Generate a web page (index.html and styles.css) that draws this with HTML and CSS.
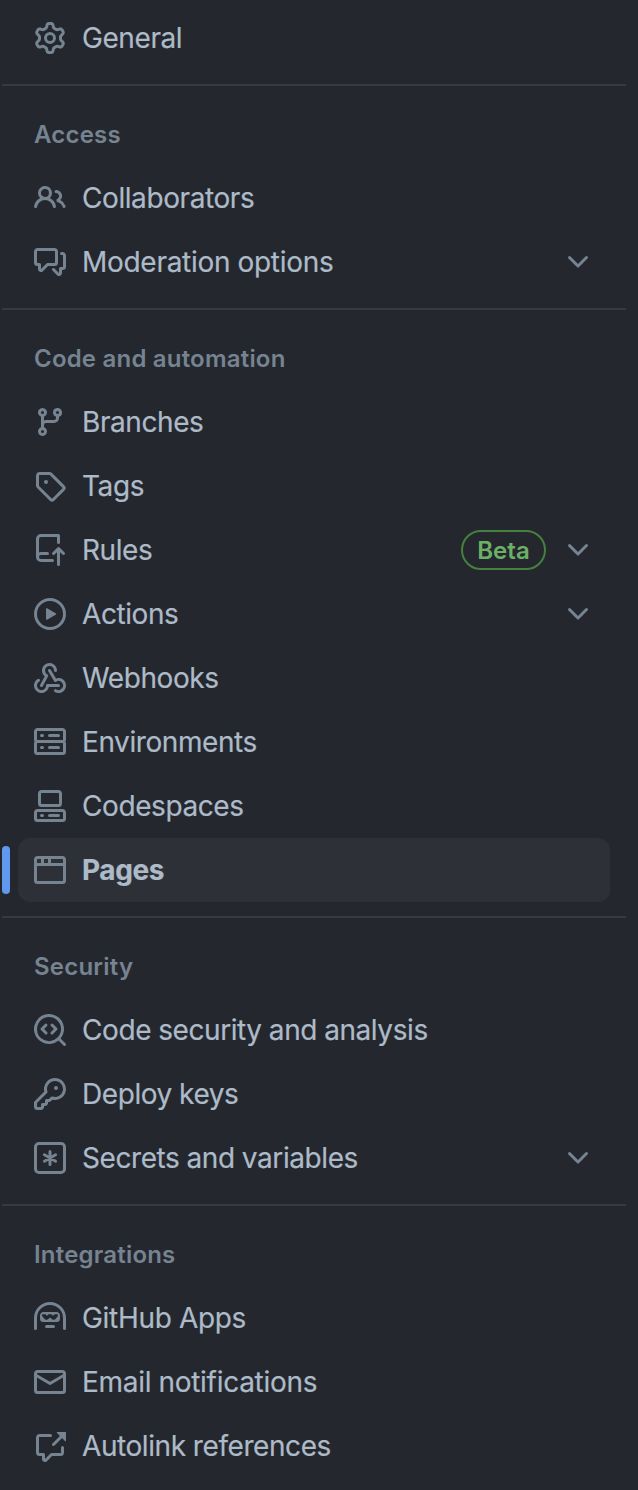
FILE: index.html
```
<!DOCTYPE html>
<html lang="en">
<head>
<meta charset="utf-8">
<title>Settings</title>
<link rel="stylesheet" href="styles.css">
</head>
<body>
<svg class="sprite" aria-hidden="true">
  <symbol id="chevron" viewBox="0 0 16 16"><path d="M12.78 5.22a.749.749 0 0 1 0 1.06l-4.25 4.25a.749.749 0 0 1-1.06 0L3.22 6.28a.749.749 0 1 1 1.06-1.06L8 8.939l3.72-3.719a.749.749 0 0 1 1.06 0Z"/></symbol>
</svg>
<nav class="sidebar">
  <ul class="group">
    <li class="item"><svg class="icon" viewBox="0 0 16 16"><path d="M8 0a8.2 8.2 0 0 1 .701.031C9.444.095 9.99.645 10.16 1.29l.288 1.107c.018.066.079.158.212.224.231.114.454.243.668.386.123.082.233.09.299.071l1.103-.303c.644-.176 1.392.021 1.82.63.27.385.506.792.704 1.218.315.675.111 1.422-.364 1.891l-.814.806c-.049.048-.098.147-.088.294.016.257.016.515 0 .772-.01.147.038.246.088.294l.814.806c.475.469.679 1.216.364 1.891a7.977 7.977 0 0 1-.704 1.217c-.428.61-1.176.807-1.82.63l-1.102-.302c-.067-.019-.177-.011-.3.071a5.909 5.909 0 0 1-.668.386c-.133.066-.194.158-.211.224l-.29 1.106c-.168.646-.715 1.196-1.458 1.26a8.006 8.006 0 0 1-1.402 0c-.743-.064-1.289-.614-1.458-1.26l-.289-1.106c-.018-.066-.079-.158-.212-.224a5.738 5.738 0 0 1-.668-.386c-.123-.082-.233-.09-.299-.071l-1.103.303c-.644.176-1.392-.021-1.82-.63a8.12 8.12 0 0 1-.704-1.218c-.315-.675-.111-1.422.363-1.891l.815-.806c.05-.048.098-.147.088-.294a6.214 6.214 0 0 1 0-.772c.01-.147-.038-.246-.088-.294l-.815-.806C.635 6.045.431 5.298.746 4.623a7.92 7.92 0 0 1 .704-1.217c.428-.61 1.176-.807 1.82-.63l1.102.302c.067.019.177.011.3-.071.214-.143.437-.272.668-.386.133-.066.194-.158.211-.224l.29-1.106C6.009.645 6.556.095 7.299.03 7.53.01 7.764 0 8 0Zm-.571 1.525c-.036.003-.108.036-.137.146l-.289 1.105c-.147.561-.549.967-.998 1.189-.173.086-.34.183-.5.29-.417.278-.97.423-1.529.27l-1.103-.303c-.109-.03-.175.016-.195.045-.22.312-.412.644-.573.99-.014.031-.021.11.059.19l.815.806c.411.406.562.957.53 1.456a4.709 4.709 0 0 0 0 .582c.032.499-.119 1.05-.53 1.456l-.815.806c-.081.08-.073.159-.059.19.162.346.353.677.573.989.02.03.085.076.195.046l1.102-.303c.56-.153 1.113-.008 1.53.27.161.107.328.204.501.29.447.222.85.629.997 1.189l.289 1.105c.029.109.101.143.137.146a6.6 6.6 0 0 0 1.142 0c.036-.003.108-.036.137-.146l.289-1.105c.147-.561.549-.967.998-1.189.173-.086.34-.183.5-.29.417-.278.97-.423 1.529-.27l1.103.303c.109.029.175-.016.195-.045.22-.313.411-.644.573-.99.014-.031.021-.11-.059-.19l-.815-.806c-.411-.406-.562-.957-.53-1.456a4.709 4.709 0 0 0 0-.582c-.032-.499.119-1.05.53-1.456l.815-.806c.081-.08.073-.159.059-.19a6.464 6.464 0 0 0-.573-.989c-.02-.03-.085-.076-.195-.046l-1.102.303c-.56.153-1.113.008-1.53-.27a4.44 4.44 0 0 0-.501-.29c-.447-.222-.85-.629-.997-1.189l-.289-1.105c-.029-.11-.101-.143-.137-.146a6.6 6.6 0 0 0-1.142 0ZM11 8a3 3 0 1 1-6 0 3 3 0 0 1 6 0ZM9.5 8a1.5 1.5 0 1 0-3.001.001A1.5 1.5 0 0 0 9.5 8Z"/></svg><span class="label">General</span></li>
  </ul>
  <h3 class="heading">Access</h3>
  <ul class="group">
    <li class="item"><svg class="icon" viewBox="0 0 16 16"><path d="M2 5.5a3.5 3.5 0 1 1 5.898 2.549 5.508 5.508 0 0 1 3.034 4.084.75.75 0 1 1-1.482.235 4 4 0 0 0-7.9 0 .75.75 0 0 1-1.482-.236A5.507 5.507 0 0 1 3.102 8.05 3.493 3.493 0 0 1 2 5.5ZM11 4a3.001 3.001 0 0 1 2.22 5.018 5.01 5.01 0 0 1 2.56 3.012.749.749 0 0 1-.885.954.752.752 0 0 1-.549-.514 3.507 3.507 0 0 0-2.522-2.372.75.75 0 0 1-.574-.73v-.352a.75.75 0 0 1 .416-.672A1.5 1.5 0 0 0 11 5.5.75.75 0 0 1 11 4Zm-5.5-.5a2 2 0 1 0-.001 3.999A2 2 0 0 0 5.5 3.5Z"/></svg><span class="label">Collaborators</span></li>
    <li class="item"><svg class="icon" viewBox="0 0 16 16"><path d="M1.75 1h8.5c.966 0 1.75.784 1.75 1.75v5.5A1.75 1.75 0 0 1 10.25 10H7.061l-2.574 2.573A1.458 1.458 0 0 1 2 11.543V10h-.25A1.75 1.75 0 0 1 0 8.25v-5.5C0 1.784.784 1 1.75 1ZM1.5 2.75v5.5c0 .138.112.25.25.25h1a.75.75 0 0 1 .75.75v2.19l2.72-2.72a.749.749 0 0 1 .53-.22h3.5a.25.25 0 0 0 .25-.25v-5.5a.25.25 0 0 0-.25-.25h-8.5a.25.25 0 0 0-.25.25Zm13 2a.25.25 0 0 0-.25-.25h-.5a.75.75 0 0 1 0-1.5h.5c.966 0 1.75.784 1.75 1.75v5.5A1.75 1.75 0 0 1 14.25 12H14v1.543a1.458 1.458 0 0 1-2.487 1.03L9.22 12.28a.749.749 0 0 1 .326-1.275.749.749 0 0 1 .734.215l2.22 2.22v-2.19a.75.75 0 0 1 .75-.75h1a.25.25 0 0 0 .25-.25Z"/></svg><span class="label wide">Moderation options</span><svg class="icon"><use href="#chevron"/></svg></li>
  </ul>
  <h3 class="heading">Code and automation</h3>
  <ul class="group">
    <li class="item"><svg class="icon" viewBox="0 0 16 16"><path d="M9.5 3.25a2.25 2.25 0 1 1 3 2.122V6A2.5 2.5 0 0 1 10 8.5H6a1 1 0 0 0-1 1v1.128a2.251 2.251 0 1 1-1.5 0V5.372a2.25 2.25 0 1 1 1.5 0v1.836A2.493 2.493 0 0 1 6 7h4a1 1 0 0 0 1-1v-.628A2.25 2.25 0 0 1 9.5 3.25Zm-6 0a.75.75 0 1 0 1.5 0 .75.75 0 0 0-1.5 0Zm8.25-.75a.75.75 0 1 0 0 1.5.75.75 0 0 0 0-1.5ZM4.25 12a.75.75 0 1 0 0 1.5.75.75 0 0 0 0-1.5Z"/></svg><span class="label">Branches</span></li>
    <li class="item"><svg class="icon" viewBox="0 0 16 16"><path d="M1 7.775V2.75C1 1.784 1.784 1 2.75 1h5.025c.464 0 .91.184 1.238.513l6.25 6.25a1.75 1.75 0 0 1 0 2.474l-5.026 5.026a1.75 1.75 0 0 1-2.474 0l-6.25-6.25A1.752 1.752 0 0 1 1 7.775Zm1.5 0c0 .066.026.13.073.177l6.25 6.25a.25.25 0 0 0 .354 0l5.025-5.025a.25.25 0 0 0 0-.354l-6.25-6.25a.25.25 0 0 0-.177-.073H2.75a.25.25 0 0 0-.25.25ZM6 5a1 1 0 1 1 0 2 1 1 0 0 1 0-2Z"/></svg><span class="label">Tags</span></li>
    <li class="item"><svg class="icon" viewBox="0 0 16 16"><path d="M1 2.5A2.5 2.5 0 0 1 3.5 0h8.75a.75.75 0 0 1 .75.75v3.5a.75.75 0 0 1-1.5 0V1.5h-8a1 1 0 0 0-1 1v6.708A2.493 2.493 0 0 1 3.5 9h3.25a.75.75 0 0 1 0 1.5H3.5a1 1 0 0 0 0 2h5.75a.75.75 0 0 1 0 1.5H3.5A2.5 2.5 0 0 1 1 11.5Zm13.23 7.79h-.001l-1.224-1.224v6.184a.75.75 0 0 1-1.5 0V9.066L10.28 10.29a.75.75 0 0 1-1.06-1.061l2.505-2.504a.75.75 0 0 1 1.06 0L15.29 9.23a.751.751 0 0 1-.018 1.042.751.751 0 0 1-1.042.018Z"/></svg><span class="label">Rules</span><span class="badge">Beta</span><svg class="icon"><use href="#chevron"/></svg></li>
    <li class="item"><svg class="icon" viewBox="0 0 16 16"><circle class="line" cx="8" cy="8" r="7.25"/><path d="M6 5.44v5.12c0 .29.32.47.57.32l4.27-2.56a.38.38 0 0 0 0-.64L6.57 5.12A.375.375 0 0 0 6 5.44Z"/></svg><span class="label">Actions</span><svg class="icon"><use href="#chevron"/></svg></li>
    <li class="item"><svg class="icon" viewBox="0 0 16 16"><path d="M5.5 4.25a2.25 2.25 0 0 1 4.5 0 .75.75 0 0 0 1.5 0 3.75 3.75 0 1 0-6.14 2.889l-2.272 4.258a.75.75 0 0 0 1.324.706L7 7.25a.75.75 0 0 0-.309-1.015A2.25 2.25 0 0 1 5.5 4.25Z"/><path d="M7.364 3.607a.75.75 0 0 1 1.03.257l2.608 4.349a3.75 3.75 0 1 1-.628 6.785.75.75 0 0 1 .752-1.299 2.25 2.25 0 1 0-.033-3.88.75.75 0 0 1-1.03-.256L7.107 4.636a.75.75 0 0 1 .257-1.03Z"/><path d="M2.9 8.776A.75.75 0 0 1 2.625 9.8 2.25 2.25 0 1 0 6 11.75a.75.75 0 0 1 .75-.751h5.5a.75.75 0 0 1 0 1.5H7.425a3.751 3.751 0 1 1-5.55-3.998.75.75 0 0 1 1.024.274Z"/></svg><span class="label">Webhooks</span></li>
    <li class="item"><svg class="icon" viewBox="0 0 16 16"><path d="M1.75 1h12.5c.966 0 1.75.784 1.75 1.75v4c0 .372-.116.717-.314 1 .198.283.314.628.314 1v4a1.75 1.75 0 0 1-1.75 1.75H1.75A1.75 1.75 0 0 1 0 12.75v-4c0-.358.109-.707.314-1a1.739 1.739 0 0 1-.314-1v-4C0 1.784.784 1 1.75 1ZM1.5 2.75v4c0 .138.112.25.25.25h12.5a.25.25 0 0 0 .25-.25v-4a.25.25 0 0 0-.25-.25H1.75a.25.25 0 0 0-.25.25Zm.25 5.75a.25.25 0 0 0-.25.25v4c0 .138.112.25.25.25h12.5a.25.25 0 0 0 .25-.25v-4a.25.25 0 0 0-.25-.25ZM7 4.75A.75.75 0 0 1 7.75 4h4.5a.75.75 0 0 1 0 1.5h-4.5A.75.75 0 0 1 7 4.75ZM7.75 10h4.5a.75.75 0 0 1 0 1.5h-4.5a.75.75 0 0 1 0-1.5ZM3 4.75A.75.75 0 0 1 3.75 4h.5a.75.75 0 0 1 0 1.5h-.5A.75.75 0 0 1 3 4.75ZM3.75 10h.5a.75.75 0 0 1 0 1.5h-.5a.75.75 0 0 1 0-1.5Z"/></svg><span class="label">Environments</span></li>
    <li class="item"><svg class="icon" viewBox="0 0 16 16"><path d="M0 11.25c0-.966.784-1.75 1.75-1.75h12.5c.966 0 1.75.784 1.75 1.75v3A1.75 1.75 0 0 1 14.25 16H1.75A1.75 1.75 0 0 1 0 14.25Zm2-9.5C2 .784 2.784 0 3.75 0h8.5C13.216 0 14 .784 14 1.75v5a1.75 1.75 0 0 1-1.75 1.75h-8.5A1.75 1.75 0 0 1 2 6.75Zm1.75-.25a.25.25 0 0 0-.25.25v5c0 .138.112.25.25.25h8.5a.25.25 0 0 0 .25-.25v-5a.25.25 0 0 0-.25-.25Zm-2 9.5a.25.25 0 0 0-.25.25v3c0 .138.112.25.25.25h12.5a.25.25 0 0 0 .25-.25v-3a.25.25 0 0 0-.25-.25Z"/><path d="M7 12.75a.75.75 0 0 1 .75-.75h4.5a.75.75 0 0 1 0 1.5h-4.5a.75.75 0 0 1-.75-.75Zm-4 0a.75.75 0 0 1 .75-.75h.5a.75.75 0 0 1 0 1.5h-.5a.75.75 0 0 1-.75-.75Z"/></svg><span class="label">Codespaces</span></li>
    <li class="item current"><svg class="icon" viewBox="0 0 16 16"><path d="M0 2.75C0 1.784.784 1 1.75 1h12.5c.966 0 1.75.784 1.75 1.75v10.5A1.75 1.75 0 0 1 14.25 15H1.75A1.75 1.75 0 0 1 0 13.25ZM14.5 6h-13v7.25c0 .138.112.25.25.25h12.5a.25.25 0 0 0 .25-.25Zm-6-3.5v2h6V2.75a.25.25 0 0 0-.25-.25ZM5 2.5v2h2v-2Zm-3.25 0a.25.25 0 0 0-.25.25V4.5h2v-2Z"/></svg><span class="label">Pages</span></li>
  </ul>
  <h3 class="heading">Security</h3>
  <ul class="group">
    <li class="item"><svg class="icon" viewBox="0 0 16 16"><path d="M8.47 4.97a.75.75 0 0 0 0 1.06L9.94 7.5 8.47 8.97a.75.75 0 1 0 1.06 1.06l2-2a.75.75 0 0 0 0-1.06l-2-2a.75.75 0 0 0-1.06 0ZM6.53 6.03a.75.75 0 0 0-1.06-1.06l-2 2a.75.75 0 0 0 0 1.06l2 2a.75.75 0 1 0 1.06-1.06L5.06 7.5l1.47-1.47Z"/><path d="M12.246 13.307a7.501 7.501 0 1 1 1.06-1.06l2.474 2.473a.749.749 0 0 1-1.06 1.06ZM1.5 7.5a6.002 6.002 0 0 0 3.608 5.504 6.002 6.002 0 0 0 6.486-1.117.748.748 0 0 1 .292-.293A6 6 0 1 0 1.5 7.5Z"/></svg><span class="label">Code security and analysis</span></li>
    <li class="item"><svg class="icon" viewBox="0 0 16 16"><path d="M10.5 0a5.499 5.499 0 1 1-1.288 10.848l-.932.932a.749.749 0 0 1-.53.22H7v.75a.749.749 0 0 1-.22.53l-.5.5a.749.749 0 0 1-.53.22H5v.75a.749.749 0 0 1-.22.53l-.5.5a.749.749 0 0 1-.53.22h-2A1.75 1.75 0 0 1 0 14.25v-2c0-.199.079-.389.22-.53l4.932-4.932A5.5 5.5 0 0 1 10.5 0Zm-4 5.5c-.001.431.069.86.205 1.269a.75.75 0 0 1-.181.768L1.5 12.56v1.69c0 .138.112.25.25.25h1.69l.06-.06v-1.19a.75.75 0 0 1 .75-.75h1.19l.06-.06v-1.19a.75.75 0 0 1 .75-.75h1.19l1.023-1.025a.75.75 0 0 1 .768-.18A4 4 0 1 0 6.5 5.5ZM11 6a1 1 0 1 1 0-2 1 1 0 0 1 0 2Z"/></svg><span class="label">Deploy keys</span></li>
    <li class="item"><svg class="icon" viewBox="0 0 16 16"><rect class="line" x=".75" y=".75" width="14.5" height="14.5" rx="1.75"/><path class="line" d="M8 4.75v6.5M5.2 6.4l5.6 3.2M10.8 6.4 5.2 9.6"/></svg><span class="label">Secrets and variables</span><svg class="icon"><use href="#chevron"/></svg></li>
  </ul>
  <h3 class="heading">Integrations</h3>
  <ul class="group">
    <li class="item"><svg class="icon" viewBox="0 0 16 16"><path fill-rule="evenodd" d="M0 8a8 8 0 1 1 16 0v5.25a.75.75 0 0 1-1.5 0V8a6.5 6.5 0 1 0-13 0v5.25a.75.75 0 0 1-1.5 0Zm5.5 4.25a.75.75 0 0 1 .75-.75h3.5a.75.75 0 0 1 0 1.5h-3.5a.75.75 0 0 1-.75-.75ZM3 6.75C3 5.784 3.784 5 4.75 5h6.5c.966 0 1.75.784 1.75 1.75v1.5A1.75 1.75 0 0 1 11.25 10h-6.5A1.75 1.75 0 0 1 3 8.25ZM4.2 6.1H5.6L6.5 6.9 7.3 6.1H8.7L9.5 6.9 10.4 6.1H11.8Q12.2 6.5 11.8 7.2L10.6 8.6Q9.9 9.1 9.2 8.7L8 7.8 6.8 8.7Q6.1 9.1 5.4 8.6L4.2 7.2Q3.8 6.5 4.2 6.1Z"/></svg><span class="label wide">GitHub Apps</span></li>
    <li class="item"><svg class="icon" viewBox="0 0 16 16"><path d="M1.75 2h12.5c.966 0 1.75.784 1.75 1.75v8.5A1.75 1.75 0 0 1 14.25 14H1.75A1.75 1.75 0 0 1 0 12.25v-8.5C0 2.784.784 2 1.75 2ZM1.5 12.251c0 .138.112.25.25.25h12.5a.25.25 0 0 0 .25-.25V5.809L8.38 9.397a.75.75 0 0 1-.76 0L1.5 5.809v6.442Zm13-8.181v-.32a.25.25 0 0 0-.25-.25H1.75a.25.25 0 0 0-.25.25v.32L8 7.88Z"/></svg><span class="label wide">Email notifications</span></li>
    <li class="item"><svg class="icon" viewBox="0 0 16 16"><path d="M2.75 3.5a.25.25 0 0 0-.25.25v7.5c0 .138.112.25.25.25h2a.75.75 0 0 1 .75.75v2.19l2.72-2.72a.749.749 0 0 1 .53-.22h4.5a.25.25 0 0 0 .25-.25v-2.5a.75.75 0 0 1 1.5 0v2.5A1.75 1.75 0 0 1 13.25 13H9.06l-2.573 2.573A1.458 1.458 0 0 1 4 14.543V13H2.75A1.75 1.75 0 0 1 1 11.25v-7.5C1 2.784 1.784 2 2.75 2h5.5a.75.75 0 0 1 0 1.5ZM16 1.25v4.146a.25.25 0 0 1-.427.177L14.03 4.03l-3.75 3.75a.749.749 0 0 1-1.275-.326.749.749 0 0 1 .215-.734l3.75-3.75-1.543-1.543A.25.25 0 0 1 11.604 1h4.146a.25.25 0 0 1 .25.25Z"/></svg><span class="label">Autolink references</span></li>
  </ul>
</nav>
</body>
</html>
```
FILE: styles.css
```
* { box-sizing: border-box; }
body {
  margin: 0;
  background: #24272e;
  color: #adbac7;
  font: 28px/40px Inter, "Liberation Sans", sans-serif;
}
.sprite { display: none; }
.sidebar {
  width: 626px;
  height: 1490px;
  padding: 6px 0 0 2px;
}
.group {
  list-style: none;
  margin: 0;
  padding: 0 16px;
}
.item {
  position: relative;
  display: flex;
  align-items: center;
  gap: 16px;
  height: 64px;
  padding: 0 16px;
  border-radius: 12px;
}
.icon {
  flex: none;
  width: 32px;
  height: 32px;
  fill: #768390;
}
.line {
  fill: none;
  stroke: #768390;
  stroke-width: 1.5;
  stroke-linecap: round;
}
.label {
  flex: 1;
  font-weight: 400;
  letter-spacing: -.42px;
  word-spacing: -.3px;
  white-space: nowrap;
  -webkit-text-stroke: .2px currentColor;
}
.wide { letter-spacing: -.29px; }
.badge {
  width: 85px;
  height: 40px;
  border: 2px solid #46803f;
  border-radius: 20px;
  color: #6bb066;
  font-size: 24px;
  line-height: 38px;
  font-weight: 600;
  text-align: center;
}
.heading {
  height: 82px;
  margin: 14px 0 0;
  padding: 17px 32px 0;
  border-top: 2px solid #353941;
  color: #768390;
  font-size: 24px;
  font-weight: 600;
  line-height: 64px;
  letter-spacing: .2px;
}
.current { background: #2d3037; }
.current .label { font-weight: 650; }
.current::before {
  content: "";
  position: absolute;
  left: -16px;
  top: 8px;
  width: 8px;
  height: 48px;
  border-radius: 4px;
  background: #6199ee;
}
```
